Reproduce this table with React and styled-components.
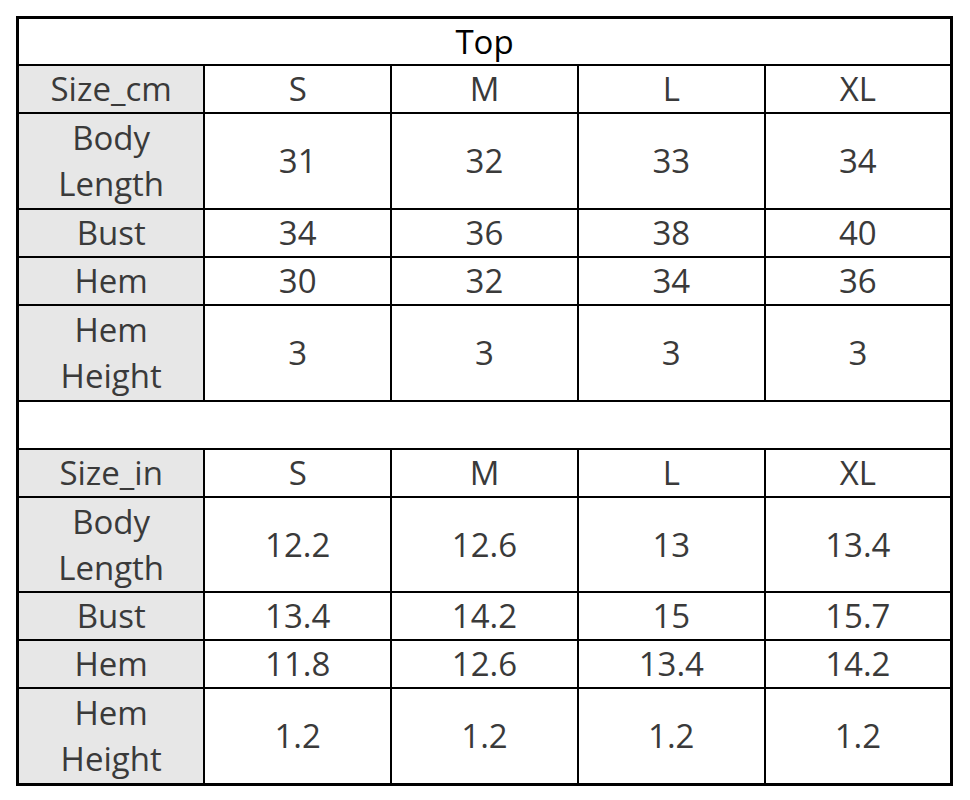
import styled, { createGlobalStyle } from "styled-components";

const GlobalStyle = createGlobalStyle`
  body {
    margin: 0;
    background: #fff;
    font-family: "Open Sans", "Noto Sans", sans-serif;
  }
`;

const sizes = ["S", "M", "L", "XL"];

const cmRows = [
  { label: ["Body", "Length"], values: ["31", "32", "33", "34"] },
  { label: ["Bust"], values: ["34", "36", "38", "40"] },
  { label: ["Hem"], values: ["30", "32", "34", "36"] },
  { label: ["Hem", "Height"], values: ["3", "3", "3", "3"] },
];

const inRows = [
  { label: ["Body", "Length"], values: ["12.2", "12.6", "13", "13.4"] },
  { label: ["Bust"], values: ["13.4", "14.2", "15", "15.7"] },
  { label: ["Hem"], values: ["11.8", "12.6", "13.4", "14.2"] },
  { label: ["Hem", "Height"], values: ["1.2", "1.2", "1.2", "1.2"] },
];

function Section({ unit, rows }) {
  return (
    <>
      <Row $lines={1}>
        <Cell $head>{`Size_${unit}`}</Cell>
        {sizes.map((s) => (
          <Cell key={s}>{s}</Cell>
        ))}
      </Row>
      {rows.map((r) => (
        <Row key={r.label.join(" ")} $lines={r.label.length}>
          <Cell $head>
            {r.label.map((l) => (
              <Line key={l}>{l}</Line>
            ))}
          </Cell>
          {r.values.map((v, i) => (
            <Cell key={i}>{v}</Cell>
          ))}
        </Row>
      ))}
    </>
  );
}

export default function App() {
  return (
    <>
      <GlobalStyle />
      <Page>
        <Table>
          <tbody>
            <Row $lines={1}>
              <TitleCell colSpan={5}>Top</TitleCell>
            </Row>
            <Section unit="cm" rows={cmRows} />
            <Row $lines={1}>
              <Cell colSpan={5} />
            </Row>
            <Section unit="in" rows={inRows} />
          </tbody>
        </Table>
      </Page>
    </>
  );
}

const Page = styled.div`
  padding: 16px 0 0 16px;
`;

const Table = styled.table`
  width: 937px;
  border-collapse: collapse;
  table-layout: fixed;
  border: 3px solid #000;
`;

const Row = styled.tr`
  height: ${(p) => p.$lines * 47.9}px;
`;

const Cell = styled.td`
  border: 2px solid #000;
  padding: 0;
  text-align: center;
  vertical-align: middle;
  font-size: 33px;
  line-height: 44px;
  color: #3a3a3a;
  background: ${(p) => (p.$head ? "#e7e7e7" : "#fff")};
`;

const TitleCell = styled(Cell)`
  color: #000;
`;

const Line = styled.div`
  white-space: nowrap;
  line-height: 46px;
`;
